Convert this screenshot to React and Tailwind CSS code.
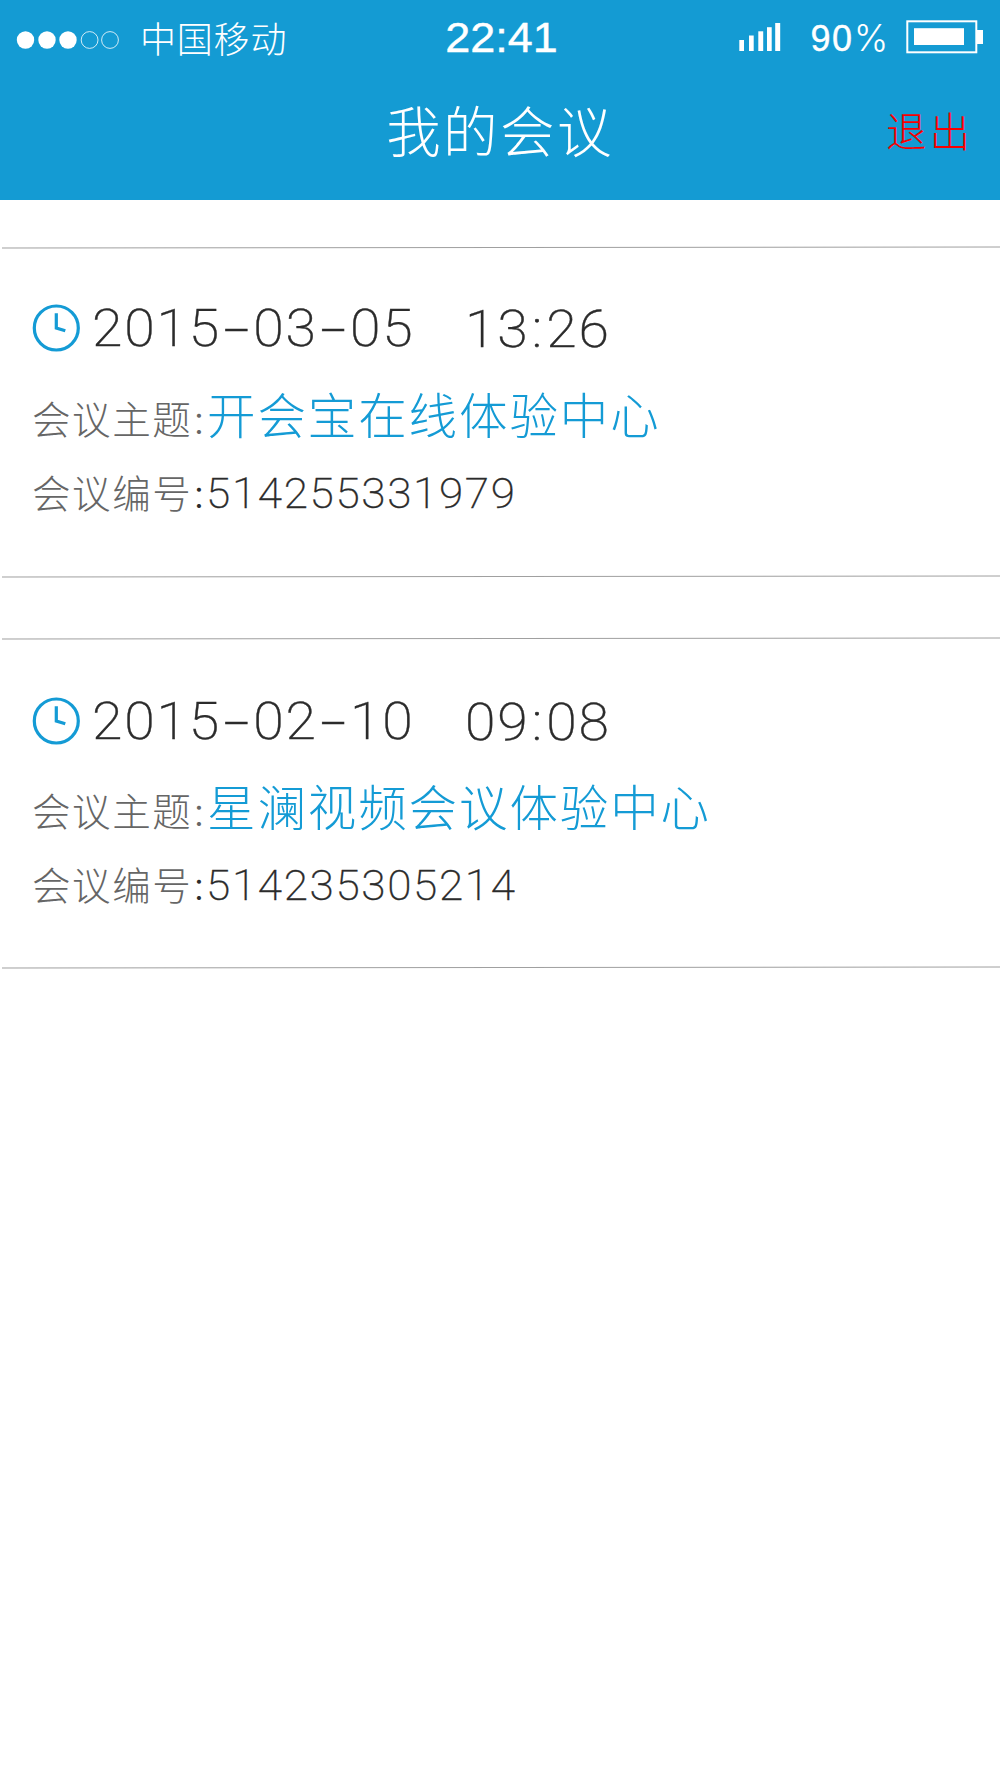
const meetings = [
  { date: '2015-03-05', time: '13:26', topic: '开会宝在线体验中心', number: '514255331979' },
  { date: '2015-02-10', time: '09:08', topic: '星澜视频会议体验中心', number: '514235305214' },
];

function SignalDots() {
  return (
    <svg width="106" height="20" viewBox="0 0 106 20" className="shrink-0">
      <g fill="#fff">
        <circle cx="9.5" cy="10" r="8.7" />
        <circle cx="31" cy="10" r="8.7" />
        <circle cx="52" cy="10" r="8.7" />
      </g>
      <g fill="none" stroke="#fff" strokeWidth="0.8">
        <circle cx="73.6" cy="10" r="8.4" />
        <circle cx="94" cy="10" r="8.4" />
      </g>
    </svg>
  );
}

function SignalBars() {
  return (
    <svg width="42" height="29" viewBox="0 0 42 29" className="-mt-[2px] shrink-0" fill="#fff">
      <rect x="0.3" y="18" width="4.7" height="11" />
      <rect x="10" y="13.5" width="4.7" height="15.5" />
      <rect x="19.3" y="9.3" width="4.9" height="19.7" />
      <rect x="28" y="5.2" width="4.7" height="23.8" />
      <rect x="36.2" y="1" width="5" height="28" />
    </svg>
  );
}

function Battery() {
  return (
    <svg width="77" height="34" viewBox="0 0 77 34" className="shrink-0">
      <rect x="1.3" y="1.3" width="69" height="31" fill="none" stroke="#fff" strokeWidth="2" />
      <rect x="8" y="8.2" width="50" height="16.8" fill="#fff" />
      <rect x="71" y="10" width="6" height="14" fill="#fff" />
    </svg>
  );
}

function Clock() {
  return (
    <svg width="48" height="48" viewBox="0 0 48 48" className="-mt-[2px] shrink-0" fill="none" stroke="#149bd5" strokeWidth="3.2">
      <circle cx="24.3" cy="24" r="22" />
      <path d="M24.3 9.3V24L33.3 26.8" />
    </svg>
  );
}

function DateText({ value }) {
  return value.split('-').map((part, i) => (
    <span key={part + i}>
      {i > 0 && (
        <span className="inline-block w-[30.6px] -translate-y-[1.5px] scale-x-[1.5] pr-[1px] text-center font-['Inter',sans-serif] text-[48px] tracking-normal">
          -
        </span>
      )}
      {part}
    </span>
  ));
}

function Meeting({ meeting }) {
  const [hours, minutes] = meeting.time.split(':');
  return (
    <section className="group flex h-[330px] flex-col">
      <div className="ml-0.5 h-px shrink-0 -rotate-[0.06deg] bg-[#a0a0a0]" />
      <div className="flex flex-1 flex-col pl-8 pt-[50px] group-last:pt-[52px]">
        <div className="flex h-[62px] items-center whitespace-nowrap font-['Roboto',sans-serif] text-[52.7px] leading-[62px] font-extralight tracking-[1.75px] [-webkit-text-stroke:0.4px_#2b2b2b]">
          <div className="flex w-[60px] items-center">
            <Clock />
          </div>
          <div className="w-[373px]">
            <div className="origin-left scale-x-[1.05]">
              <DateText value={meeting.date} />
            </div>
          </div>
          <div className="origin-left scale-x-[1.05]">
            {hours}
            <span className="mx-[2px]">:</span>
            {minutes}
          </div>
        </div>
        <div className="mt-[22px] flex h-[70px] items-baseline whitespace-nowrap leading-[70px] group-last:mt-[21px]">
          <div className="w-[175px] text-[38.5px] tracking-[1.6px] text-[#666]">
            会议主题<span className="ml-[1px]">:</span>
          </div>
          <div className="text-[48.5px] tracking-[1.9px] text-[#149bd5]">{meeting.topic}</div>
        </div>
        <div className="mt-[7px] flex h-[70px] items-baseline whitespace-nowrap leading-[70px]">
          <div className="w-[174px] text-[38.5px] tracking-[1.6px] text-[#666]">
            会议编号<span className="ml-[1px] text-[#2b2b2b]">:</span>
          </div>
          <div className="origin-left scale-x-[1.045] font-['Roboto',sans-serif] text-[42.2px] font-extralight tracking-[1.55px] [-webkit-text-stroke:0.3px_#2b2b2b]">
            {meeting.number}
          </div>
        </div>
      </div>
      <div className="ml-0.5 h-px shrink-0 -rotate-[0.06deg] bg-[#a0a0a0]" />
    </section>
  );
}

export default function App() {
  return (
    <div className="flex h-[1778px] w-[1000px] flex-col overflow-hidden bg-white font-['Inter','Noto_Sans_CJK_SC',sans-serif] font-light text-[#2b2b2b]">
      <header className="flex h-[200px] shrink-0 flex-col bg-[#149bd3] text-white">
        <div className="grid h-20 grid-cols-3 items-center">
          <div className="flex items-center gap-[18px] pl-4">
            <SignalDots />
            <span className="whitespace-nowrap text-[36px] leading-[40px] tracking-[0.8px]">中国移动</span>
          </div>
          <div className="flex justify-center pb-[4px] pl-1">
            <span className="origin-center scale-x-[1.07] font-['Liberation_Sans',sans-serif] text-[42px] leading-[40px] [-webkit-text-stroke:0.4px_white]">
              22:41
            </span>
          </div>
          <div className="flex items-center justify-end pb-[6px] pr-[17px]">
            <SignalBars />
            <span className="ml-[29px] mr-[16px] pt-[2px] font-['Liberation_Sans',sans-serif] text-[36px] leading-[40px] tracking-[1.6px] [-webkit-text-stroke:0.4px_white]">
              90<span className="font-['Inter',sans-serif] text-[37px] font-light [-webkit-text-stroke:0px]">%</span>
            </span>
            <Battery />
          </div>
        </div>
        <div className="grid h-[104px] grid-cols-[1fr_auto_1fr] items-center">
          <h1 className="col-start-2 text-[54.5px] leading-[80px] tracking-[2.4px]">我的会议</h1>
          <button className="justify-self-end pr-[27px] pt-[2px] text-[40.5px] leading-[60px] tracking-[3px] text-[#f80000]">退出</button>
        </div>
      </header>
      <main className="flex flex-col gap-[61px] pt-[46.5px]">
        {meetings.map((m) => (
          <Meeting key={m.number} meeting={m} />
        ))}
      </main>
    </div>
  );
}
